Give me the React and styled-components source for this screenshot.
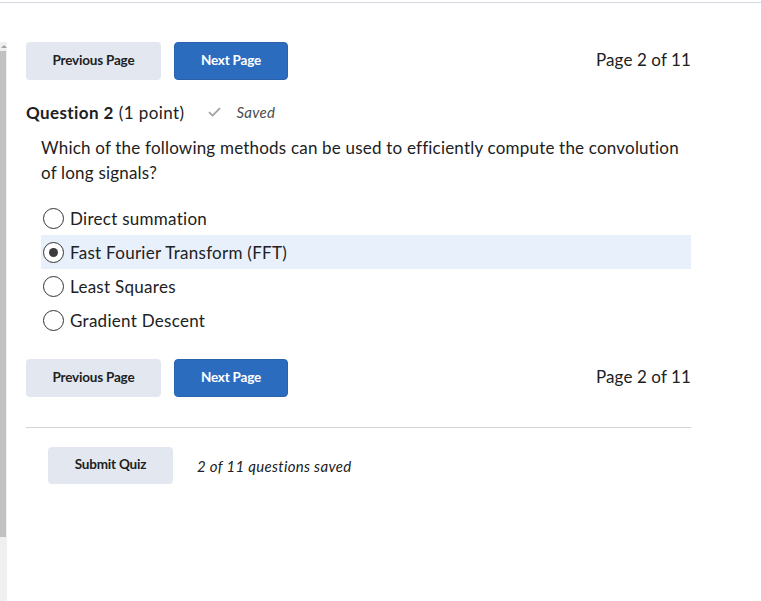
import React from 'react';
import styled, { createGlobalStyle } from 'styled-components';

const Global = createGlobalStyle`
  body {
    margin: 0;
    background: #ffffff;
    font-family: Lato, 'Open Sans', sans-serif;
    color: #202122;
  }
`;

const options = [
  'Direct summation',
  'Fast Fourier Transform (FFT)',
  'Least Squares',
  'Gradient Descent',
];

const Nav = ({ top }) => (
  <NavRow $top={top}>
    <Button>Previous Page</Button>
    <Button $primary>Next Page</Button>
    <PageLabel>Page 2 of 11</PageLabel>
  </NavRow>
);

const App = () => {
  return (
    <>
      <Global />
      <Page>
        <TopRule />
        <Body>
          <ScrollStrip>
            <Arrow />
            <Thumb />
          </ScrollStrip>
          <Content>
            <Nav top={39} />
            <QuestionHeader>
              <strong>Question 2</strong>
              <Points>(1 point)</Points>
              <SavedMark>
                <svg width="13" height="10" viewBox="0 0 13 10">
                  <path d="M1 5.2 L4.6 8.6 L12 1.2" fill="none" stroke="#9ea3a7" strokeWidth="1.8" />
                </svg>
                <em>Saved</em>
              </SavedMark>
            </QuestionHeader>
            <Prompt>
              Which of the following methods can be used to efficiently compute the convolution
              of long signals?
            </Prompt>
            <Options>
              {options.map((o, i) => (
                <Option key={o} $selected={i === 1}>
                  <Radio $checked={i === 1} />
                  {o}
                </Option>
              ))}
            </Options>
            <Nav top={22} />
            <Divider />
            <SubmitRow>
              <Button $wide>Submit Quiz</Button>
              <SavedCount>2 of 11 questions saved</SavedCount>
            </SubmitRow>
          </Content>
        </Body>
      </Page>
    </>
  );
};

export default App;

const Page = styled.div`
  width: 761px;
  height: 601px;
  overflow: hidden;
`;

const TopRule = styled.div`
  height: 2px;
  border-bottom: 1px solid #d5dae2;
`;

const Body = styled.div`
  display: flex;
`;

const ScrollStrip = styled.div`
  width: 7px;
  height: 560px;
  margin-top: 39px;
  background: #f0f0f0;
  display: flex;
  flex-direction: column;
  align-items: flex-start;
`;

const Arrow = styled.div`
  width: 0;
  height: 0;
  margin: 3px 0 3px 1px;
  border-left: 3px solid transparent;
  border-right: 3px solid transparent;
  border-bottom: 3px solid #a3a3a3;
`;

const Thumb = styled.div`
  width: 6px;
  height: 486px;
  background: #c1c1c1;
`;

const Content = styled.div`
  padding-left: 19px;
  width: 665px;
`;

const NavRow = styled.div`
  display: flex;
  align-items: center;
  gap: 13px;
  margin-top: ${(p) => p.$top}px;
`;

const Button = styled.button`
  height: ${(p) => (p.$wide ? '37px' : '38px')};
  width: ${(p) => (p.$wide ? '125px' : p.$primary ? '114px' : '135px')};
  border-radius: 4px;
  border: ${(p) => (p.$primary ? '1px solid #2a62ad' : 'none')};
  background: ${(p) => (p.$primary ? '#2b6cbf' : '#e3e8f0')};
  color: ${(p) => (p.$primary ? '#ffffff' : '#202122')};
  font-family: Lato, sans-serif;
  font-weight: 700;
  font-size: 13.5px;
  letter-spacing: -0.2px;
  padding: 0 0 3px;
`;

const PageLabel = styled.div`
  margin-left: auto;
  padding-bottom: 3px;
  font-size: 17px;
  letter-spacing: 0.1px;
  color: #202122;
`;

const QuestionHeader = styled.div`
  display: flex;
  align-items: center;
  margin-top: 20px;
  height: 24px;
  font-size: 17px;
  letter-spacing: 0.4px;
  strong {
    font-weight: 700;
  }
`;

const Points = styled.span`
  margin-left: 5px;
`;

const SavedMark = styled.span`
  display: flex;
  align-items: center;
  gap: 15px;
  margin-left: 24px;
  font-size: 15px;
  letter-spacing: 0.3px;
  color: #494c4e;
`;

const Prompt = styled.p`
  margin: 11px 0 0 15px;
  font-size: 17px;
  line-height: 25px;
  letter-spacing: 0.2px;
  color: #202122;
  width: 645px;
`;

const Options = styled.div`
  margin: 16px 0 0 15px;
  display: flex;
  flex-direction: column;
  width: 650px;
`;

const Option = styled.label`
  display: flex;
  align-items: center;
  gap: 6px;
  height: 34px;
  padding-left: 2px;
  font-size: 17px;
  letter-spacing: 0.28px;
  background: ${(p) => (p.$selected ? '#e8f0fc' : 'transparent')};
`;

const Radio = styled.span`
  box-sizing: border-box;
  width: 21px;
  height: 21px;
  border-radius: 50%;
  border: 1px solid #333;
  background: #fff;
  display: flex;
  align-items: center;
  justify-content: center;
  &::after {
    content: '';
    width: 9px;
    height: 9px;
    border-radius: 50%;
    background: #3a3c3e;
    display: ${(p) => (p.$checked ? 'block' : 'none')};
  }
`;

const Divider = styled.hr`
  margin: 30px 0 0;
  border: none;
  border-top: 1px solid #d3d5d8;
`;

const SubmitRow = styled.div`
  display: flex;
  align-items: center;
  gap: 24px;
  margin-top: 19px;
  padding-left: 22px;
`;

const SavedCount = styled.em`
  font-size: 15px;
  letter-spacing: 0.3px;
  color: #202122;
`;
